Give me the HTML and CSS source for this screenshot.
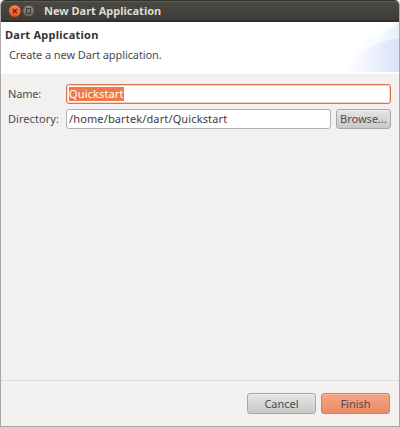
FILE: index.html
```html
<!DOCTYPE html>
<html lang="en">
<head>
<meta charset="utf-8">
<title>New Dart Application</title>
<link rel="stylesheet" href="styles.css">
</head>
<body>
<div class="window">
  <div class="titlebar">
    <svg class="controls" width="28" height="14" viewBox="0 0 28 14" aria-hidden="true">
      <defs>
        <linearGradient id="close" x2="0" y2="1"><stop stop-color="#fb8353"/><stop offset="1" stop-color="#e8501b"/></linearGradient>
        <linearGradient id="max" x2="0" y2="1"><stop stop-color="#8c8b83"/><stop offset="1" stop-color="#62615b"/></linearGradient>
      </defs>
      <circle cx="6.8" cy="7" r="6.3" fill="url(#close)" stroke="#302c27" stroke-width=".6"/>
      <path d="M4.8 5l4 4M8.8 5l-4 4" stroke="#69230d" stroke-width="1.2"/>
      <circle cx="20.6" cy="7" r="5.9" fill="url(#max)" stroke="#30302c" stroke-width=".6"/>
      <rect x="18.5" y="4.5" width="4" height="5" fill="none" stroke="#3e3d39"/>
    </svg>
    <span class="title">New Dart Application</span>
  </div>
  <div class="header">
    <svg class="swoosh" width="56" height="50" viewBox="0 0 56 50" aria-hidden="true">
      <defs>
        <linearGradient id="blue"><stop stop-color="#fff"/><stop offset=".4" stop-color="#f1f5fd"/><stop offset="1" stop-color="#d8e2f7"/></linearGradient>
        <linearGradient id="pale"><stop stop-color="#fff"/><stop offset="1" stop-color="#e9effb"/></linearGradient>
      </defs>
      <path d="M3 50C14 27 32 5 56 1V50Z" fill="#fafcff"/>
      <path d="M22 50C26 28 38 8 56 1V50Z" fill="url(#pale)"/>
      <path d="M2 50C16 31 33 18 56 17V50Z" fill="url(#blue)"/>
    </svg>
    <div class="heading">Dart Application</div>
    <div class="desc">Create a new Dart application.</div>
  </div>
  <div class="form">
    <label class="name-label">Name:</label>
    <div class="field focused"><span class="selected">Quickstart</span></div>
    <label class="dir-label">Directory:</label>
    <div class="field"><span class="path">/home/bartek/dart/Quickstart</span></div>
    <div class="button">Browse...</div>
  </div>
  <div class="footer">
    <div class="button">Cancel</div>
    <div class="button primary">Finish</div>
  </div>
</div>
</body>
</html>
```
FILE: styles.css
```css
* { box-sizing: border-box; }
body { margin: 0; background: #fff; font: 11px/16px "Noto Sans", sans-serif; color: #4c4c4c; }
.window { height: 427px; display: flex; flex-direction: column; background: #f2f1f0; border: 1px solid #aaa8a6; border-top: 0; border-radius: 5px 5px 0 0; overflow: hidden; white-space: nowrap; }
.titlebar { height: 22px; margin: 0 -1px; padding-left: 8px; display: flex; align-items: center; background: linear-gradient(#35342f 0 1px, #5a5954 1px 2px, #4a4944 2px, #3c3b37 20px, #2b2a27 21px); border-radius: 5px 5px 0 0; color: #dfdbd2; }
.controls { flex: none; }
.title { margin-left: 8px; font-weight: 700; }
.header { height: 53px; padding: 5px 0 0 4px; position: relative; background: #fff; border-bottom: 1px solid #f1f1f1; }
.swoosh { position: absolute; right: 0; top: 0; }
.heading { font-weight: 700; color: #333; letter-spacing: .25px; }
.desc { margin: 4px 0 0 4px; letter-spacing: -.1px; }
.form { flex: 1; display: grid; grid-template-columns: 53px 265px 55px; grid-template-rows: 20px 20px; column-gap: 5px; row-gap: 5px; padding: 9px 8px 0 7px; align-content: start; line-height: 20px; }
.name-label { letter-spacing: -.2px; }
.dir-label { letter-spacing: .05px; }
.field { height: 20px; padding-left: 2px; line-height: 18px; border: 1px solid #b5b2ad; border-radius: 3px; background: #fff; color: #3c3c3c; }
.path { letter-spacing: .13px; }
.focused { grid-column: 2 / 4; border-color: #df7350; box-shadow: inset 0 0 0 1px #f8d3c5; }
.selected { display: inline-block; height: 14px; line-height: 14px; background: #f07746; color: #fff; letter-spacing: .13px; }
.button { height: 20px; line-height: 18px; text-align: center; border: 1px solid #aaa8a5; border-radius: 3px; background: linear-gradient(#e5e5e5, #c9c9c9); box-shadow: inset 0 1px #ededed; }
.footer { height: 46px; border-top: 1px solid #dfdddb; display: flex; justify-content: flex-end; gap: 5px; padding: 12px 9px 0; }
.footer .button { width: 69px; height: 21px; line-height: 19px; }
.footer .primary { background: linear-gradient(#f7a485, #ed8b64); border-color: #b98a77; box-shadow: inset 0 1px #fab79e; }
```
